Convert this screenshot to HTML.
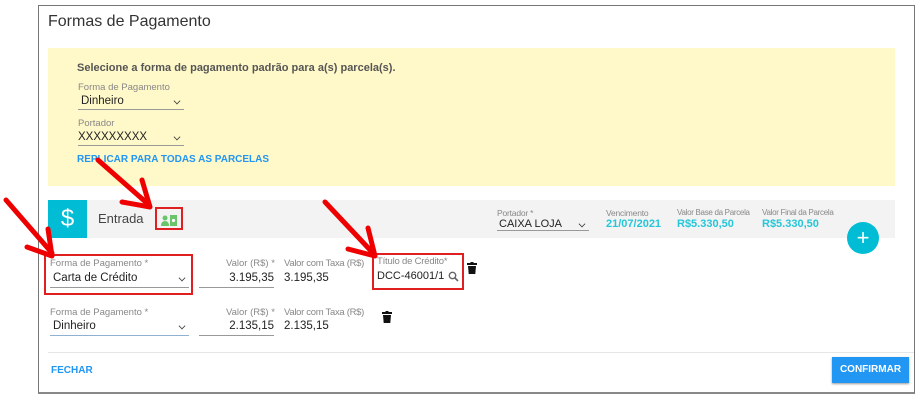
<!DOCTYPE html>
<html><head><meta charset="utf-8">
<style>
*{margin:0;padding:0;box-sizing:border-box}
body{width:920px;height:400px;background:#fff;font-family:"Liberation Sans",sans-serif;position:relative;overflow:hidden;color:#333}
.a{position:absolute;white-space:nowrap}
.lbl{font-size:9.5px;color:#888}
.val{font-size:11.5px;color:#222}
.sel{border-bottom:1px solid #999}
.chev{position:absolute;right:4px;top:3px;width:6px;height:6px;border-right:1.5px solid #333;border-bottom:1.5px solid #333;transform:rotate(45deg) scale(.8)}
.sm{font-size:8.5px;letter-spacing:-0.2px}
</style></head><body>
<div class="a" style="left:38px;top:5px;width:877px;height:389px;border:1px solid #777;border-bottom:2px solid #888"></div>
<div class="a" style="left:48px;top:13px;font-size:16px;color:#333">Formas de Pagamento</div>
<div class="a" style="left:48px;top:48px;width:847px;height:138px;background:#fff8c8"></div>
<div class="a" style="left:77px;top:62px;font-size:11px;font-weight:bold;color:#555">Selecione a forma de pagamento padrão para a(s) parcela(s).</div>
<div class="a lbl" style="left:78px;top:82px">Forma de Pagamento</div>
<div class="a val sel" style="left:78px;top:95px;width:106px;height:15px;padding-left:3px">Dinheiro<span class="chev"></span></div>
<div class="a lbl" style="left:78px;top:118px">Portador</div>
<div class="a val sel" style="left:78px;top:131px;width:106px;height:15px">XXXXXXXXX<span class="chev"></span></div>
<div class="a" style="left:77px;top:154px;font-size:10px;font-weight:bold;color:#2196f3">REPLICAR PARA TODAS AS PARCELAS</div>

<div class="a" style="left:48px;top:200px;width:847px;height:38px;background:#f3f3f3"></div>
<div class="a" style="left:48px;top:200px;width:39px;height:38px;background:#00bcd4;color:#fff;font-size:24px;text-align:center;line-height:38px">$</div>
<div class="a" style="left:98px;top:211px;font-size:13px;color:#444">Entrada</div>
<div class="a" style="left:155px;top:207px;width:28px;height:23px;border:2px solid #e02020"></div>
<div class="a" style="left:161px;top:213px;width:16px;height:11px"><svg width="16" height="11"><circle cx="4" cy="3" r="2.5" fill="#6ac46a"/><path d="M0 11 Q0 6 4 6 Q8 6 8 11Z" fill="#6ac46a"/><rect x="9" y="0" width="7" height="11" fill="#6ac46a"/><circle cx="12.5" cy="5.5" r="1.6" fill="#fff"/></svg></div>

<div class="a lbl sm" style="left:497px;top:208px">Portador *</div>
<div class="a val sel" style="left:497px;top:218px;width:92px;height:13px;font-size:11px;line-height:12px;padding-left:2px">CAIXA LOJA<span class="chev"></span></div>
<div class="a lbl sm" style="left:606px;top:208px">Vencimento</div>
<div class="a" style="left:606px;top:218px;font-size:11px;font-weight:bold;color:#26c6da">21/07/2021</div>
<div class="a lbl sm" style="left:677px;top:208px;font-size:8px;letter-spacing:-0.3px">Valor Base da Parcela</div>
<div class="a" style="left:677px;top:218px;font-size:11px;font-weight:bold;color:#26c6da">R$5.330,50</div>
<div class="a lbl sm" style="left:762px;top:208px;font-size:8px;letter-spacing:-0.3px">Valor Final da Parcela</div>
<div class="a" style="left:762px;top:218px;font-size:11px;font-weight:bold;color:#26c6da">R$5.330,50</div>
<div class="a" style="left:847px;top:222px;width:32px;height:32px;border-radius:50%;background:#00bcd4;color:#fff;font-size:22px;text-align:center;line-height:31px">+</div>

<!-- row 1 -->
<div class="a" style="left:44px;top:254px;width:149px;height:41px;border:2px solid #e02020"></div>
<div class="a lbl" style="left:50px;top:258px">Forma de Pagamento *</div>
<div class="a val sel" style="left:50px;top:272px;width:139px;height:16px;padding-left:3px">Carta de Crédito<span class="chev"></span></div>
<div class="a lbl" style="left:226px;top:258px">Valor (R$) *</div>
<div class="a val" style="left:199px;top:272px;width:75px;height:16px;text-align:right;border-bottom:1px solid #999">3.195,35</div>
<div class="a lbl" style="left:284px;top:258px;letter-spacing:-0.3px">Valor com Taxa (R$)</div>
<div class="a val" style="left:284px;top:272px">3.195,35</div>
<div class="a" style="left:372px;top:253px;width:92px;height:37px;border:2px solid #e02020"></div>
<div class="a lbl" style="left:377px;top:256px;letter-spacing:-0.2px">Título de Crédito*</div>
<div class="a val" style="left:377px;top:270px;font-size:11px">DCC-46001/1</div>
<div class="a" style="left:448px;top:269px"><svg width="11" height="11"><circle cx="4.5" cy="4.5" r="3.2" stroke="#666" stroke-width="1.4" fill="none"/><line x1="7" y1="7" x2="10" y2="10" stroke="#666" stroke-width="1.6"/></svg></div>
<div class="a" style="left:467px;top:261px"><svg width="10" height="12"><rect x="0" y="1" width="10" height="2" fill="#111"/><rect x="3.5" y="0" width="3" height="2" fill="#111"/><path d="M1 4H9L8.3 12H1.7Z" fill="#111"/></svg></div>

<!-- row 2 -->
<div class="a lbl" style="left:50px;top:307px">Forma de Pagamento *</div>
<div class="a val" style="left:50px;top:320px;width:139px;height:16px;padding-left:3px;border-bottom:1px solid #8fb0d0">Dinheiro<span class="chev"></span></div>
<div class="a lbl" style="left:226px;top:307px">Valor (R$) *</div>
<div class="a val" style="left:199px;top:320px;width:75px;height:16px;text-align:right;border-bottom:1px solid #999">2.135,15</div>
<div class="a lbl" style="left:284px;top:307px;letter-spacing:-0.3px">Valor com Taxa (R$)</div>
<div class="a val" style="left:284px;top:320px">2.135,15</div>
<div class="a" style="left:382px;top:310px"><svg width="10" height="12"><rect x="0" y="1" width="10" height="2" fill="#111"/><rect x="3.5" y="0" width="3" height="2" fill="#111"/><path d="M1 4H9L8.3 12H1.7Z" fill="#111"/></svg></div>

<div class="a" style="left:48px;top:352px;width:866px;height:1px;background:#e6e6e6"></div>
<div class="a" style="left:51px;top:365px;font-size:10px;font-weight:bold;color:#2196f3">FECHAR</div>
<div class="a" style="left:832px;top:357px;width:77px;height:26px;background:#2196f3;color:#fff;font-size:10px;font-weight:bold;text-align:center;line-height:26px;box-shadow:0 1px 2px #999">CONFIRMAR</div>

<svg class="a" style="left:0;top:0" width="920" height="400">
<g stroke="#e00" stroke-width="5" stroke-linecap="round" stroke-linejoin="round" fill="none">
<line x1="6" y1="200" x2="52" y2="253"/>
<path d="M27 247 L52 256 L48 229"/>
<line x1="98" y1="160" x2="148" y2="204"/>
<path d="M122 202 L150 207 L142 180"/>
<line x1="325" y1="202" x2="373" y2="253"/>
<path d="M348 249 L375 256 L368 228"/>
</g>
</svg>
</body></html>
